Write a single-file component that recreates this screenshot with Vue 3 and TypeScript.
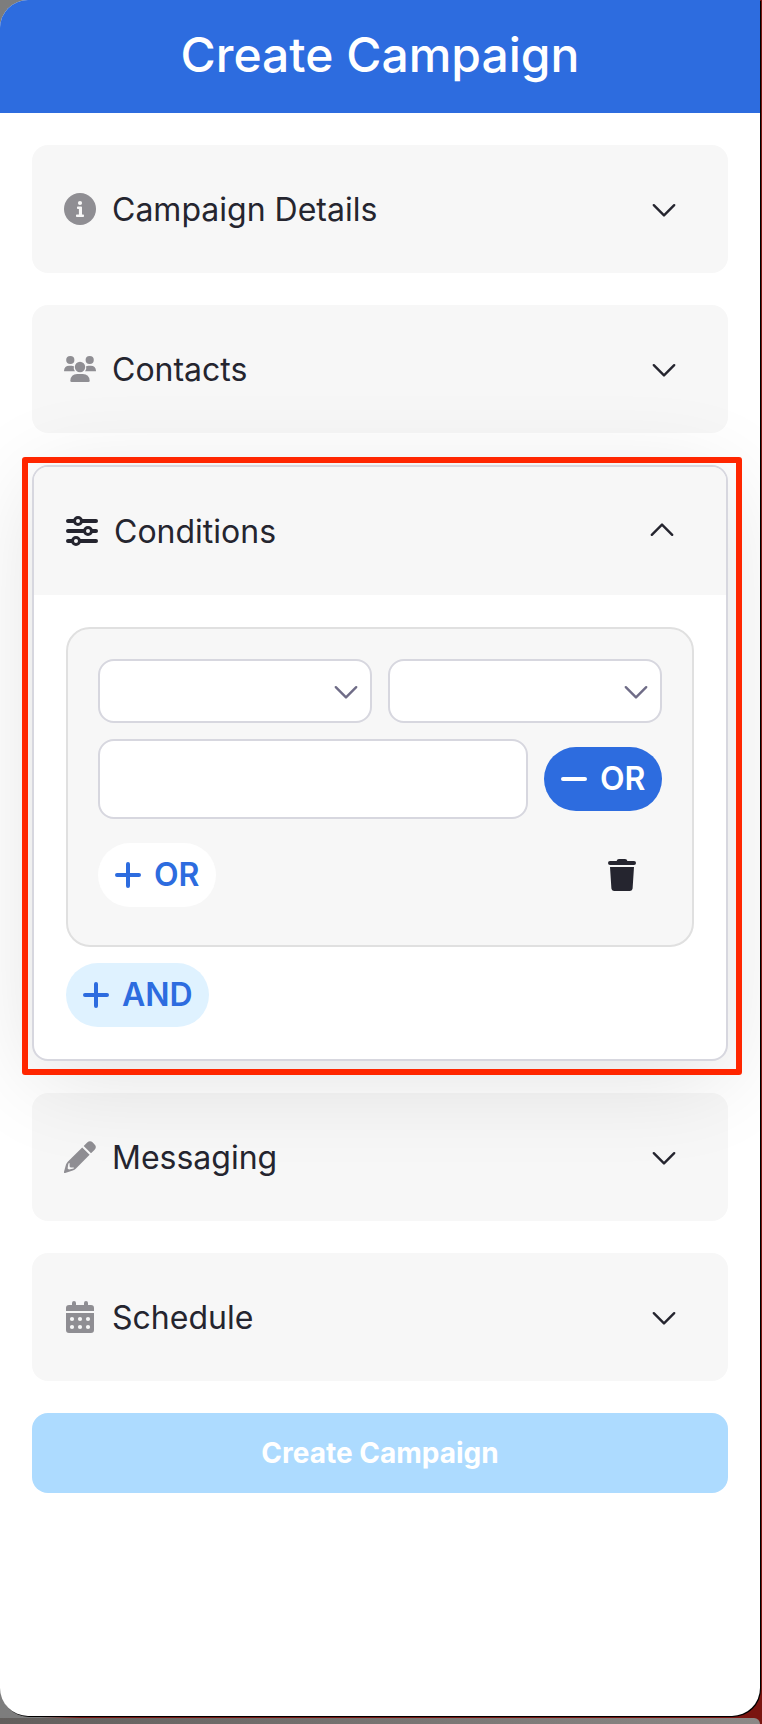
<script setup lang="ts">
import { ref } from 'vue'

type SectionId = 'details' | 'contacts' | 'conditions' | 'messaging' | 'schedule'

interface Section {
  id: SectionId
  title: string
}

const sections: Section[] = [
  { id: 'details', title: 'Campaign Details' },
  { id: 'contacts', title: 'Contacts' },
  { id: 'conditions', title: 'Conditions' },
  { id: 'messaging', title: 'Messaging' },
  { id: 'schedule', title: 'Schedule' },
]

const openSection = ref<SectionId | null>('conditions')
const field = ref('')
const operator = ref('')
const value = ref('')

function toggle(id: SectionId): void {
  openSection.value = openSection.value === id ? null : id
}
</script>

<template>
  <div class="backdrop">
    <main class="panel">
      <header class="panel-header">
        <h1>Create Campaign</h1>
      </header>

      <form class="sections" @submit.prevent>
        <div
          v-for="section in sections"
          :key="section.id"
          class="section"
          :class="{ highlighted: openSection === section.id }"
        >
          <section class="card" :class="{ open: openSection === section.id }">
            <button
              type="button"
              class="card-header"
              :aria-expanded="openSection === section.id"
              @click="toggle(section.id)"
            >
              <svg class="section-icon" viewBox="0 0 32 32" aria-hidden="true">
                <template v-if="section.id === 'details'">
                  <circle cx="16" cy="16" r="16" fill="currentColor" />
                  <circle cx="16" cy="10" r="2.1" class="cut" />
                  <path class="cut" d="M13.8 13.6H17.2Q18 13.6 18 14.4V21.6H19.2Q20 21.6 20 22.4V23.2Q20 24 19.2 24H12.8Q12 24 12 23.2V22.4Q12 21.6 12.8 21.6H14.9V16H13.8Q13 16 13 15.2V14.4Q13 13.6 13.8 13.6Z" />
                </template>
                <g v-else-if="section.id === 'contacts'" fill="currentColor">
                  <circle cx="6.3" cy="7" r="4.1" />
                  <circle cx="25.7" cy="7" r="4.1" />
                  <circle cx="16" cy="14" r="5.2" />
                  <path d="M.6 18.3Q0 18.3 0 17.7Q.4 12.7 5.2 12.7H7.6Q8.8 12.7 9.9 13.2Q9.2 16 10.9 18.3Z" />
                  <path d="M31.4 18.3Q32 18.3 32 17.7Q31.6 12.7 26.8 12.7H24.4Q23.2 12.7 22.1 13.2Q22.8 16 21.1 18.3Z" />
                  <path d="M7.6 29Q6.3 29 6.3 27.7Q6.8 21 13.2 21H18.8Q25.2 21 25.7 27.7Q25.7 29 24.4 29Z" />
                </g>
                <g v-else-if="section.id === 'conditions'" stroke="currentColor" stroke-linecap="round">
                  <path d="M2 6H30M2 16H30M2 26H30" stroke-width="4" />
                  <g class="knob" stroke-width="3">
                    <circle cx="12" cy="6" r="3.5" />
                    <circle cx="22" cy="16" r="3.5" />
                    <circle cx="10" cy="26" r="3.5" />
                  </g>
                </g>
                <g v-else-if="section.id === 'messaging'" fill="currentColor">
                  <path d="M19.7 5L23.2 1.6Q26 -1.2 28.8 1.6L30.6 3.4Q33.2 6.2 30.4 9L27 12.3Z" />
                  <path fill-rule="evenodd" d="M18.2 6.4L25.6 13.8L12 27.4Q10.6 28.8 8.8 29.6L1.2 32Q-.2 32.2 0 30.8L2 23.6Q2.6 21.8 4 20.5ZM4.4 22.6L3.6 27.4L5 28.6L9.8 27.4V26.6H6.6L5.6 25.4V22Z" />
                </g>
                <g v-else>
                  <path fill="currentColor" d="M2 10V7Q2 4 5 4H8V2Q8 0 10 0Q12 0 12 2V4H20V2Q20 0 22 0Q24 0 24 2V4H27Q30 4 30 7V10ZM2 12H30V29Q30 32 27 32H5Q2 32 2 29Z" />
                  <g class="cut">
                    <circle v-for="n in 6" :key="n" :cx="8 + ((n - 1) % 3) * 8" :cy="n > 3 ? 26 : 18" r="2.1" />
                  </g>
                </g>
              </svg>
              <span class="card-title">{{ section.title }}</span>
              <svg class="chevron" viewBox="0 0 24 24" aria-hidden="true">
                <path v-if="openSection === section.id" d="M1.8 15.8L12 5.6L22.2 15.8" />
                <path v-else d="M1.8 8.2L12 18.4L22.2 8.2" />
              </svg>
            </button>

            <div v-if="section.id === 'conditions' && openSection === section.id" class="card-body">
              <div class="group">
                <div class="row">
                  <div class="select">
                    <select v-model="field" aria-label="Field"></select>
                    <svg class="chevron" viewBox="0 0 24 24" aria-hidden="true">
                      <path d="M1.8 8.2L12 18.4L22.2 8.2" />
                    </svg>
                  </div>
                  <div class="select">
                    <select v-model="operator" aria-label="Operator"></select>
                    <svg class="chevron" viewBox="0 0 24 24" aria-hidden="true">
                      <path d="M1.8 8.2L12 18.4L22.2 8.2" />
                    </svg>
                  </div>
                </div>
                <div class="row">
                  <input v-model="value" class="value" type="text" aria-label="Value" />
                  <button type="button" class="pill primary">
                    <svg viewBox="0 0 28 28" aria-hidden="true"><path d="M3 14H25" /></svg>
                    OR
                  </button>
                </div>
                <div class="row actions">
                  <button type="button" class="pill plain">
                    <svg viewBox="0 0 28 28" aria-hidden="true"><path d="M3 14H25M14 3V25" /></svg>
                    OR
                  </button>
                  <button type="button" class="trash" aria-label="Delete group">
                    <svg viewBox="0 0 28 32" aria-hidden="true">
                      <path d="M2 2H8.6Q9 0 11 0H17Q19 0 19.4 2H26Q28 2 28 4Q28 6 26 6H2Q0 6 0 4Q0 2 2 2ZM2 8H26L24.6 29.6Q24.4 32 22 32H6Q3.6 32 3.4 29.6Z" />
                    </svg>
                  </button>
                </div>
              </div>
              <button type="button" class="pill tinted">
                <svg viewBox="0 0 28 28" aria-hidden="true"><path d="M3 14H25M14 3V25" /></svg>
                AND
              </button>
            </div>
          </section>
        </div>

        <button type="submit" class="submit" disabled>Create Campaign</button>
      </form>
    </main>
    <div class="window-below"></div>
  </div>
</template>

<style>
html,
body {
  margin: 0;
}
</style>

<style scoped>
.backdrop {
  display: flex;
  flex-direction: column;
  gap: 2px;
  min-height: 100vh;
  box-sizing: border-box;
  overflow: hidden;
  background: linear-gradient(to right, #7d7d7d 40px, #7a1510 80px);
  font-family: Inter, "DejaVu Sans", sans-serif;
  color: #25252f;
}

.backdrop *,
.backdrop *::before {
  box-sizing: border-box;
}

button,
input,
select {
  margin: 0;
  font: inherit;
  color: inherit;
}

button {
  border: 0;
  padding: 0;
  background: none;
  cursor: pointer;
}

.panel {
  flex: 1;
  margin-right: 2px;
  overflow: hidden;
  border-radius: 28px 0 28px 28px;
  background: #fff;
  box-shadow: 1px 1px 0 #000;
}

.window-below {
  height: 6px;
  margin-right: 2px;
  border-radius: 0 28px 0 0;
  background: linear-gradient(to right, #625e5c, #8c8886);
}

.panel-header {
  padding: 25px 32px 28px;
  background: #2d6cdf;
  color: #fff;
  text-align: center;
}

h1 {
  margin: 0;
  font-size: 48px;
  font-weight: 500;
  line-height: 60px;
}

.sections {
  display: flex;
  flex-direction: column;
  gap: 32px;
  padding: 32px;
}

.section {
  position: relative;
}

.highlighted {
  z-index: 1;
}

.highlighted::before {
  content: "";
  position: absolute;
  inset: -8px -14px -14px -10px;
  border: 6px solid #ff2600;
  border-radius: 3px;
}

.card {
  overflow: hidden;
  border-radius: 16px;
  background: #f7f7f7;
}

.card.open {
  border: 2px solid #d7d7df;
  background: #fff;
  box-shadow: 0 16px 96px rgba(0, 0, 0, 0.12);
}

.card-header {
  display: flex;
  align-items: center;
  gap: 16px;
  width: 100%;
  padding: 40px 52px 40px 32px;
  background: #f7f7f7;
  text-align: left;
}

.section-icon {
  flex: none;
  width: 32px;
  height: 32px;
  color: #8f8e93;
}

.open .section-icon {
  color: #25252f;
}

.cut,
.knob {
  fill: #f7f7f7;
}

.card-title {
  flex: 1;
  padding-top: 2px;
  font-size: 32px;
  line-height: 46px;
}

.chevron {
  flex: none;
  width: 24px;
  height: 24px;
  fill: none;
  stroke: currentColor;
  stroke-width: 2.4;
  stroke-linecap: round;
  stroke-linejoin: round;
}

.card-body {
  display: flex;
  flex-direction: column;
  align-items: flex-start;
  gap: 16px;
  padding: 32px;
}

.group {
  display: flex;
  flex-direction: column;
  gap: 16px;
  width: 100%;
  padding: 30px 30px 38px;
  border: 2px solid #e0e0e0;
  border-radius: 24px;
  background: #f7f7f7;
}

.row {
  display: flex;
  align-items: center;
  gap: 16px;
}

.actions {
  justify-content: space-between;
  padding: 8px 26px 0 0;
}

.select {
  display: grid;
  flex: 1;
  align-items: center;
  color: #6f6c87;
}

.select > * {
  grid-area: 1 / 1;
}

.select .chevron {
  justify-self: end;
  margin-right: 14px;
  pointer-events: none;
}

select,
.value {
  width: 100%;
  height: 64px;
  padding: 0 40px 0 16px;
  appearance: none;
  border: 2px solid #d7d7df;
  border-radius: 16px;
  background: #fff;
  font-size: 28px;
}

.value {
  flex: 1;
  min-width: 0;
  height: 80px;
  padding: 0 16px;
}

.pill {
  display: flex;
  flex: none;
  align-items: center;
  gap: 12px;
  min-width: 118px;
  padding: 12px 16px;
  border-radius: 32px;
  font-size: 32px;
  font-weight: 600;
  line-height: 40px;
}

.pill svg {
  width: 28px;
  height: 28px;
  fill: none;
  stroke: currentColor;
  stroke-width: 4;
  stroke-linecap: round;
}

.primary {
  background: #2d6cdf;
  color: #fff;
}

.plain {
  background: #fff;
  color: #2d6cdf;
}

.tinted {
  background: #dff2ff;
  color: #2d6cdf;
}

.trash svg {
  display: block;
  width: 28px;
  height: 32px;
  fill: currentColor;
}

.submit {
  padding: 20px;
  border-radius: 16px;
  background: #addbff;
  color: #fff;
  font-size: 28px;
  font-weight: 700;
  line-height: 40px;
}
</style>
